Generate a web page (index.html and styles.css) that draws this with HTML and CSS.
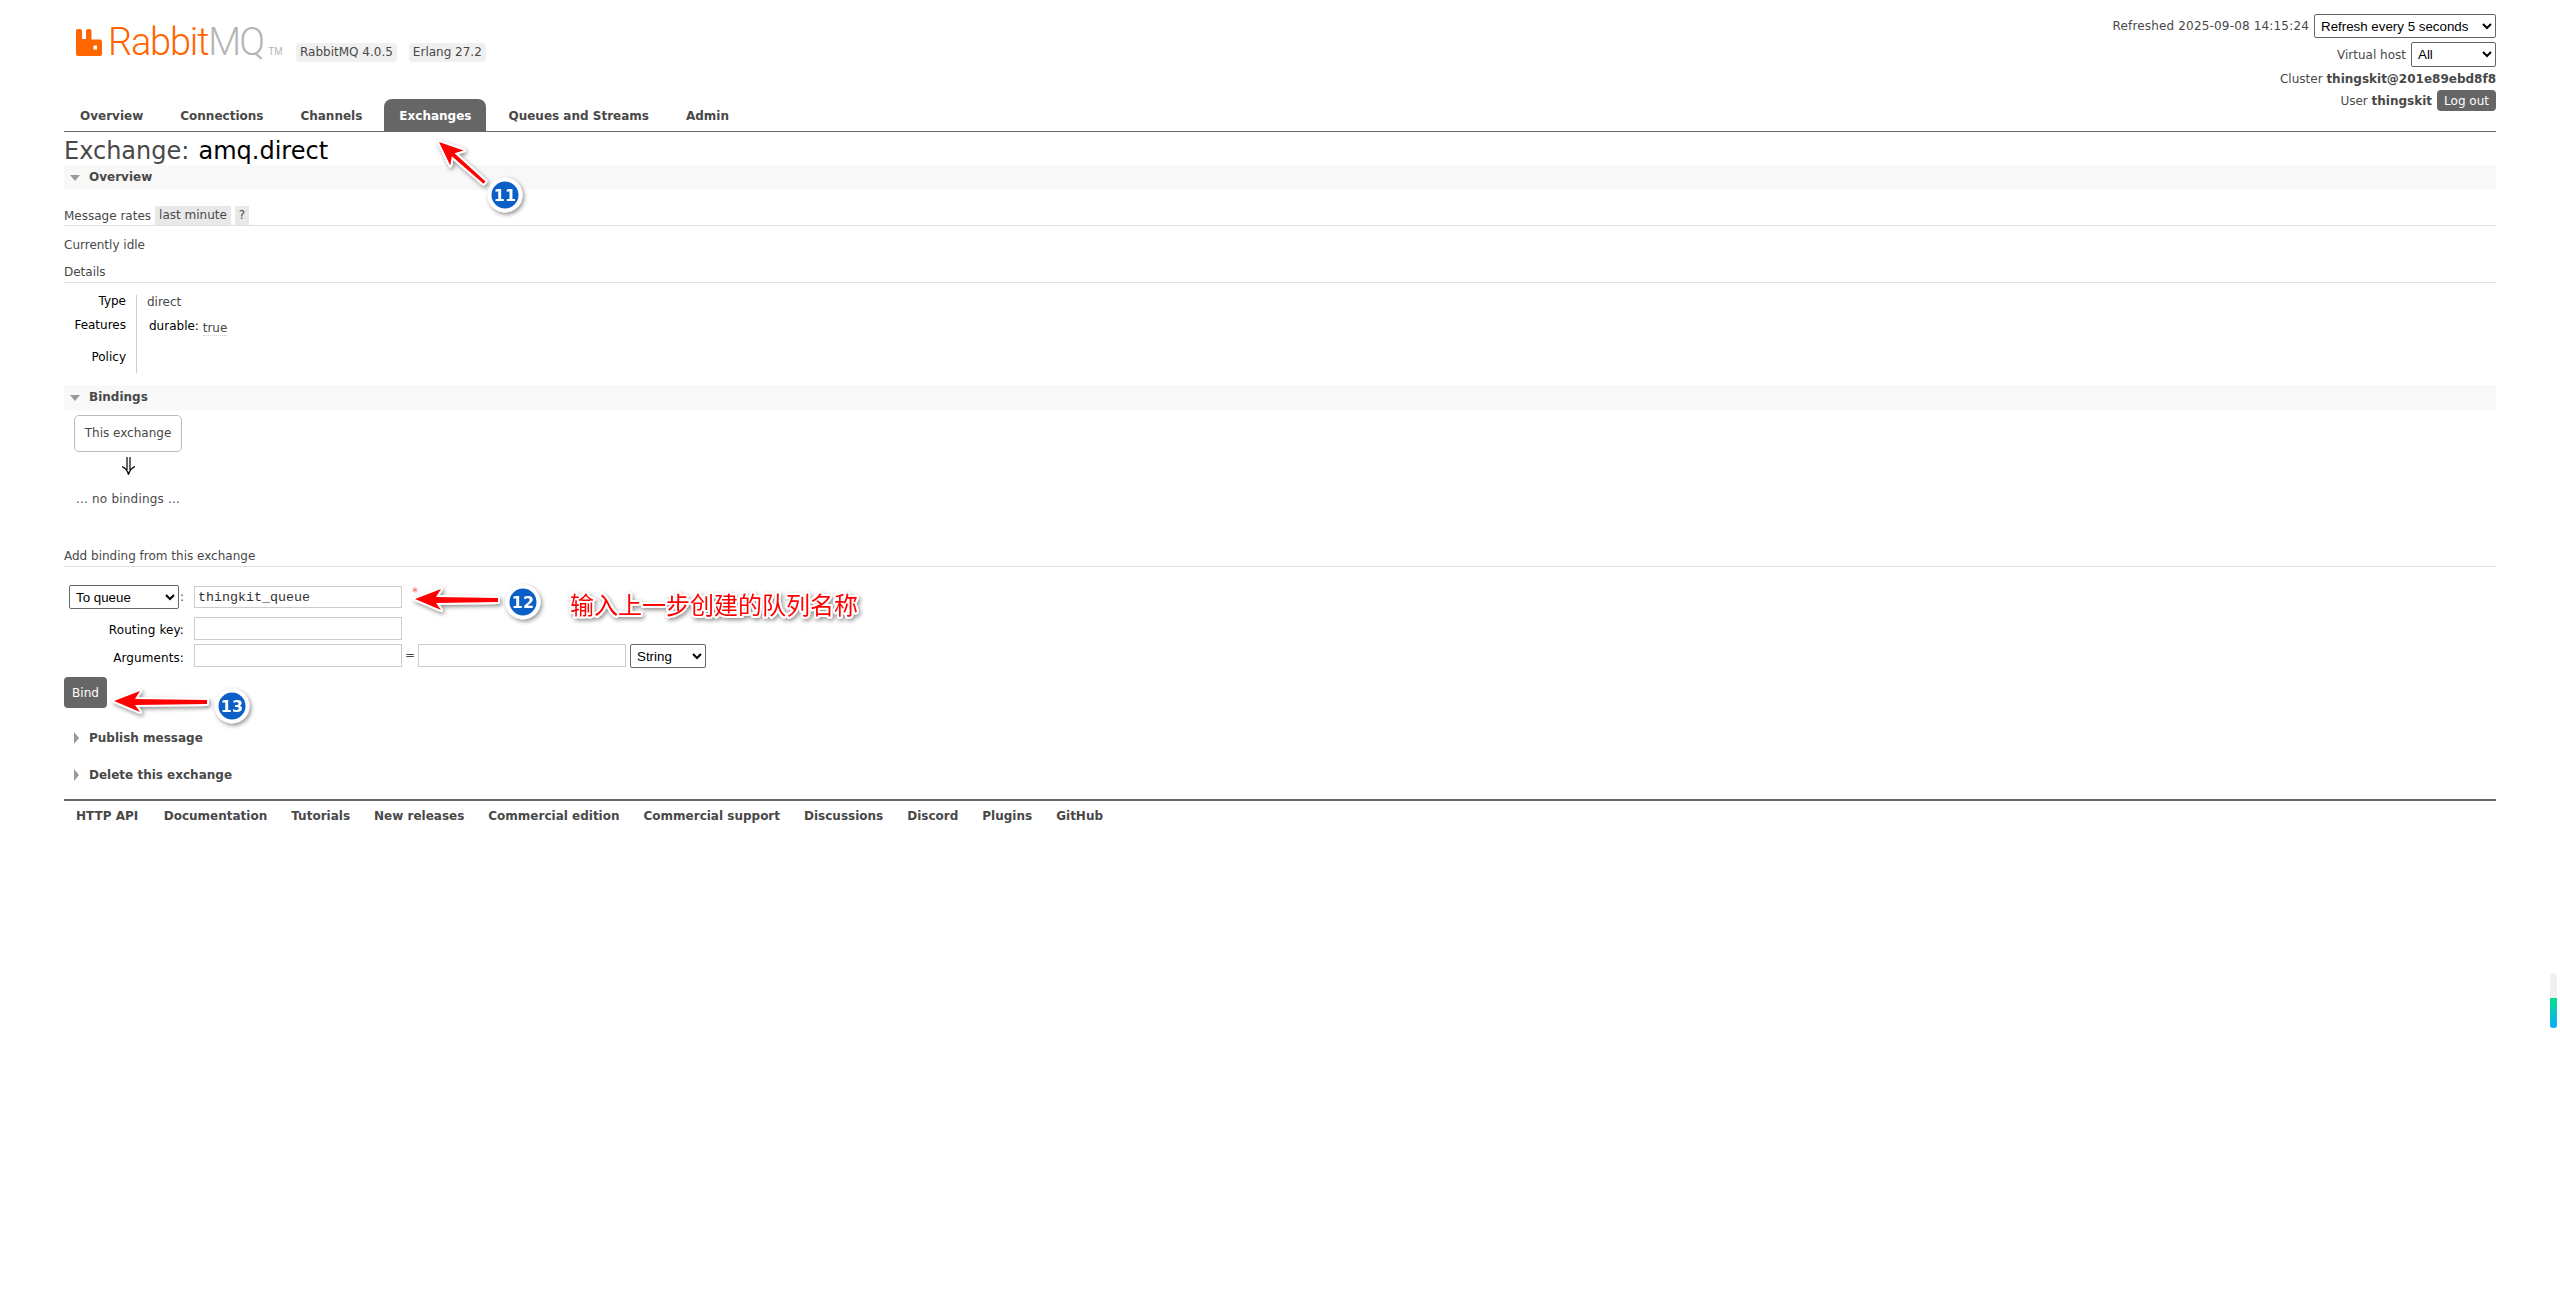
FILE: index.html
```html
<!DOCTYPE html>
<html lang="en">
<head>
<meta charset="utf-8">
<title>RabbitMQ Management</title>
<link rel="stylesheet" href="styles.css">
</head>
<body>
<div class="outer">
  <header class="header">
    <div class="brand">
      <div class="logo-row">
        <div class="logo">
          <svg class="logo-icon" viewBox="0 0 26 27" width="26" height="27"><path fill="#ff6600" d="M0 1.5Q0 0 1.5 0H4Q6 0 6 2V10H10V2Q10 0 12 0H13.5Q15.5 0 15.5 2V10.5H24Q26 10.5 26 12.5V25Q26 27 24 27H2Q0 27 0 25ZM17.5 16.5V20.5H21V16.5Z" fill-rule="evenodd"/></svg>
          <span class="logo-rabbit">Rabbit</span><span class="logo-mq">MQ</span><span class="logo-tm">TM</span>
        </div>
        <span class="version">RabbitMQ 4.0.5</span>
        <span class="version">Erlang 27.2</span>
      </div>
      <nav class="menu">
        <a class="tab">Overview</a>
        <a class="tab">Connections</a>
        <a class="tab">Channels</a>
        <a class="tab tab-active">Exchanges</a>
        <a class="tab">Queues and Streams</a>
        <a class="tab">Admin</a>
      </nav>
    </div>
    <div class="status">
      <div class="status-row status-refresh"><span class="refreshed">Refreshed 2025-09-08 14:15:24</span>
        <select class="sel sel-refresh"><option>Refresh every 5 seconds</option></select></div>
      <div class="status-row status-vhost"><span>Virtual host</span>
        <select class="sel sel-vhost"><option>All</option></select></div>
      <div class="status-row status-cluster"><span>Cluster <strong>thingskit@201e89ebd8f8</strong></span></div>
      <div class="status-row status-user"><span>User <strong>thingskit</strong></span><button class="logout">Log out</button></div>
    </div>
  </header>

  <main>
    <h1 class="title">Exchange: <b>amq.direct</b></h1>

    <section>
      <h2 class="bar"><i class="tri-down"></i>Overview</h2>
      <div class="sub sub-rates"><span>Message rates</span><span class="pill pill-range">last minute</span><span class="pill pill-help">?</span></div>
      <p class="idle">Currently idle</p>
      <div class="sub sub-details"><span>Details</span></div>
      <dl class="facts">
        <dt>Type</dt><dd class="fact-type">direct</dd>
        <dt>Features</dt><dd class="fact-features"><b>durable:</b> <abbr class="dotted">true</abbr></dd>
        <dt>Policy</dt><dd></dd>
      </dl>
    </section>

    <section>
      <h2 class="bar"><i class="tri-down"></i>Bindings</h2>
      <div class="bind-box">This exchange</div>
      <div class="bind-arrow"><svg width="13" height="18" viewBox="0 0 13 18"><path class="dbl-arrow" d="M5 0V13M8 0V13M0 9.5Q5 11.500 6.500 17.500Q8 11.500 13 9.500"/></svg></div>
      <p class="no-bind">... no bindings ...</p>
      <div class="sub sub-add"><span>Add binding from this exchange</span></div>
      <form class="bind-form">
        <div class="form-first"><select class="sel sel-dest"><option>To queue</option></select><span class="colon">:</span></div>
        <input class="field field-mono" value="thingkit_queue"><span class="star">*</span>
        <label class="form-label">Routing key:</label>
        <input class="field"><span></span>
        <label class="form-label">Arguments:</label>
        <div class="args"><input class="field"><span class="eq">=</span><input class="field"><select class="sel sel-type"><option>String</option></select></div>
      </form>
      <button class="bind-btn">Bind</button>
    </section>

    <h2 class="fold fold-publish"><i class="tri-right"></i>Publish message</h2>
    <h2 class="fold fold-delete"><i class="tri-right"></i>Delete this exchange</h2>
  </main>

  <footer class="footer">
    <a>HTTP API</a><a>Documentation</a><a>Tutorials</a><a>New releases</a><a>Commercial edition</a><a>Commercial support</a><a>Discussions</a><a>Discord</a><a>Plugins</a><a>GitHub</a>
  </footer>
</div>

<svg class="annot" width="2560" height="1305" viewBox="0 0 2560 1305">
  <defs>
    <filter id="sh" x="-30%" y="-30%" width="170%" height="170%"><feDropShadow dx="1.5" dy="2" stdDeviation="2" flood-color="#000" flood-opacity=".45"/></filter>
  </defs>
  <g filter="url(#sh)">
    <polygon class="arrow" transform="translate(439 142) rotate(41.7)" points="0,0 24,-10 19,-2 61,-1.5 61,1.5 19,2 24,10"/>
    <circle class="disc" cx="505" cy="195" r="15.5"/>
    <text class="num" x="505" y="201">11</text>
    <polygon class="arrow" points="415,599 441,589 436,597 498,598 498,602 436,603 441,610"/>
    <circle class="disc" cx="523" cy="602" r="15.5"/>
    <text class="num" x="523" y="608">12</text>
    <polygon class="arrow" points="114,701 140,691 135,699 207,700 207,704 135,705 140,712"/>
    <circle class="disc" cx="232" cy="706" r="15.5"/>
    <text class="num" x="232" y="712">13</text>
    <text class="note" x="570" y="614">输入上一步创建的队列名称</text>
  </g>
</svg>
<div class="scroll-widget"><div class="scroll-thumb"></div></div>
</body>
</html>
```
FILE: styles.css
```css
html, body { margin: 0; padding: 0; background: #fff; }
body { font: 12px "DejaVu Sans", Verdana, sans-serif; color: #484848; height: 1305px; overflow: hidden; position: relative; }
.outer { padding: 0 64px; }

/* header */
.header { display: flex; justify-content: space-between; height: 131px; border-bottom: 1px solid #666; }
.brand { display: flex; flex-direction: column; }
.logo-row { display: flex; align-items: flex-start; height: 99px; }
.logo { display: flex; align-items: baseline; width: 220px; margin: 29px 0 0 12px; height: 27px; }
.logo-icon { flex: none; margin-right: 6px; align-self: flex-start; }
.logo-rabbit, .logo-mq { font: 300 38px/27px Roboto, "Liberation Sans", sans-serif; }
.logo-rabbit { color: #ff6600; letter-spacing: -1.2px; }
.logo-mq { color: #b5b5b5; letter-spacing: -1.8px; }
.logo-tm { color: #b5b5b5; font: 10px/1 "Liberation Sans", sans-serif; margin-left: 5px; }
.version { background: #f0f0f0; border-radius: 4px; padding: 0 4px; line-height: 19px; margin: 43px 12px 0 0; font-size: 12px; }
.menu { display: flex; gap: 7px; margin-left: 1px; }
.tab { font-weight: bold; padding: 0 15px; height: 32px; line-height: 34px; border-radius: 8px 8px 0 0; }
.tab-active { background: #666; color: #fff; }

.status { display: flex; flex-direction: column; align-items: flex-end; padding-top: 14px; }
.status-row { display: flex; align-items: center; gap: 5px; }
.refreshed { letter-spacing: .17px; }
.status-refresh { height: 24px; }
.status-vhost { height: 25px; margin-top: 4px; }
.status-cluster { height: 16px; margin-top: 4px; }
.status-user { height: 21px; margin-top: 3px; }
.sel { font: 13.33px "Liberation Sans", Arial, sans-serif; color: #000; background: #fff; border: 1px solid #666; border-radius: 2px; padding: 0 2px; box-sizing: border-box; }
.sel-refresh { width: 182px; height: 24px; }
.sel-vhost { width: 85px; height: 25px; }
.logout { font: 12px "DejaVu Sans", Verdana, sans-serif; background: #666; color: #fff; border: 0; border-radius: 4px; padding: 0 7px; height: 21px; }

/* content */
.title { font-size: 24px; font-weight: normal; margin: 0; height: 33px; line-height: 38px; word-spacing: 1.5px; }
.title b { font-weight: normal; color: #000; }
.bar { font-size: 12px; font-weight: bold; margin: 0; height: 25px; line-height: 25px; background: #f8f8f8; display: flex; align-items: center; }
.tri-down { width: 0; height: 0; border: 5px solid transparent; border-top: 6px solid #999; border-bottom: 0; margin: 0 9px 0 6px; }
.tri-right { width: 0; height: 0; border: 6px solid transparent; border-left: 5px solid #999; border-right: 0; margin: 0 10px 0 10px; }
.sub { display: flex; align-items: center; border-bottom: 1px solid #e0e0e0; }
.sub-rates { height: 19px; margin-top: 16px; }
.pill { background: #e8e8e8; height: 19px; line-height: 19px; padding: 0 4px; }
.pill-range, .pill-help { margin-left: 4px; }
.idle { margin: 11px 0 0; height: 16px; line-height: 16px; }
.sub-details { height: 20px; margin-top: 9px; }
.facts { display: grid; grid-template-columns: 62px 1fr; grid-template-rows: 26px 26px 26px; margin: 12px 0 0; }
.facts dt { color: #000; text-align: right; padding-right: 10px; margin: 0; width: 62px; }
.facts dt:nth-of-type(1) { line-height: 12px; }
.facts dt:nth-of-type(2) { line-height: 8px; }
.facts dt:nth-of-type(3) { line-height: 20px; }
.facts dd { margin: 0 0 0 10px; border-left: 1px solid #ccc; padding-left: 10px; }
.fact-type { line-height: 14px; }
.fact-features { line-height: 11px; }
.fact-features b { font-weight: normal; color: #000; margin-left: 2px; }
.dotted { border-bottom: 1px dotted #ccc; position: relative; top: 2px; }
section + section { margin-top: 12px; }

.bind-box { box-sizing: border-box; width: 108px; height: 37px; line-height: 35px; text-align: center; margin: 5px 0 0 10px; border: 1px solid #bbb; border-radius: 5px; }
.bind-arrow { display: flex; justify-content: center; align-items: flex-start; width: 108px; margin-left: 10px; height: 26px; padding-top: 5px; box-sizing: border-box; }
.dbl-arrow { fill: none; stroke: #000; stroke-width: 1.2; }
.no-bind { margin: 13px 0 0 12px; height: 16px; line-height: 16px; letter-spacing: .2px; }
.sub-add { height: 18px; padding-bottom: 1px; margin-top: 40px; }

.bind-form { display: grid; grid-template-columns: 130px max-content 1fr; grid-template-rows: 24px 31px 28px; margin-top: 18px; align-items: end; }
.form-first { display: flex; align-items: center; padding-left: 5px; }
.form-label { color: #000; text-align: right; padding-right: 10px; line-height: 16px; margin-bottom: 2px; letter-spacing: .1px; }
.colon { margin-left: 1px; }
.sel-dest { width: 110px; height: 24px; flex: none; }
.sel-type { width: 76px; height: 24px; margin-left: 4px; }
.field { box-sizing: border-box; width: 208px; height: 23px; border: 1px solid #ccc; padding: 0 3px; margin: 0; display: block; background: #fff; }
.form-first + .field { margin-bottom: 1px; height: 22px; }
.field-mono { font: 13.33px "Liberation Mono", "Courier New", monospace; color: #333; }
.star { color: #f66; margin-left: 10px; align-self: start; line-height: 14px; }
.args { grid-column: 2 / 4; display: flex; align-items: flex-start; height: 24px; }
.eq { width: 16px; text-align: center; line-height: 23px; }
.bind-btn { display: block; font: 12px "DejaVu Sans", Verdana, sans-serif; background: #666; color: #fff; border: 0; border-radius: 4px; width: 43px; height: 31px; padding: 0; margin-top: 9px; }

.fold { display: flex; align-items: center; font-size: 12px; font-weight: bold; margin: 0; height: 18px; }
.fold-publish { margin-top: 21px; }
.fold-delete { margin-top: 19px; }

.footer { display: flex; gap: 24px; border-top: 2px solid #666; margin-top: 15px; padding: 8px 12px 0; font-weight: bold; }
.footer a:first-child { margin-right: 1.5px; }

/* annotations laid over the screenshot */
.annot { position: absolute; left: 0; top: 0; pointer-events: none; }
.arrow { fill: #f00; stroke: #fff; stroke-width: 4; stroke-linejoin: round; paint-order: stroke; }
.disc { fill: #0a5fc8; stroke: #fff; stroke-width: 4; }
.num { font: bold 16px "DejaVu Sans", sans-serif; fill: #fff; text-anchor: middle; }
.note { font: 24px "Noto Sans CJK SC", sans-serif; fill: #f00; stroke: #fff; stroke-width: 4px; stroke-linejoin: round; paint-order: stroke; }

.scroll-widget { position: absolute; left: 2550px; top: 973px; width: 7px; height: 55px; background: #f0f0f0; border-radius: 4px 4px 3px 3px; }
.scroll-thumb { position: absolute; left: 0; right: 0; bottom: 0; height: 30px; background: linear-gradient(#00e08a, #10a8ff); border-radius: 0 0 3px 3px; }
```
